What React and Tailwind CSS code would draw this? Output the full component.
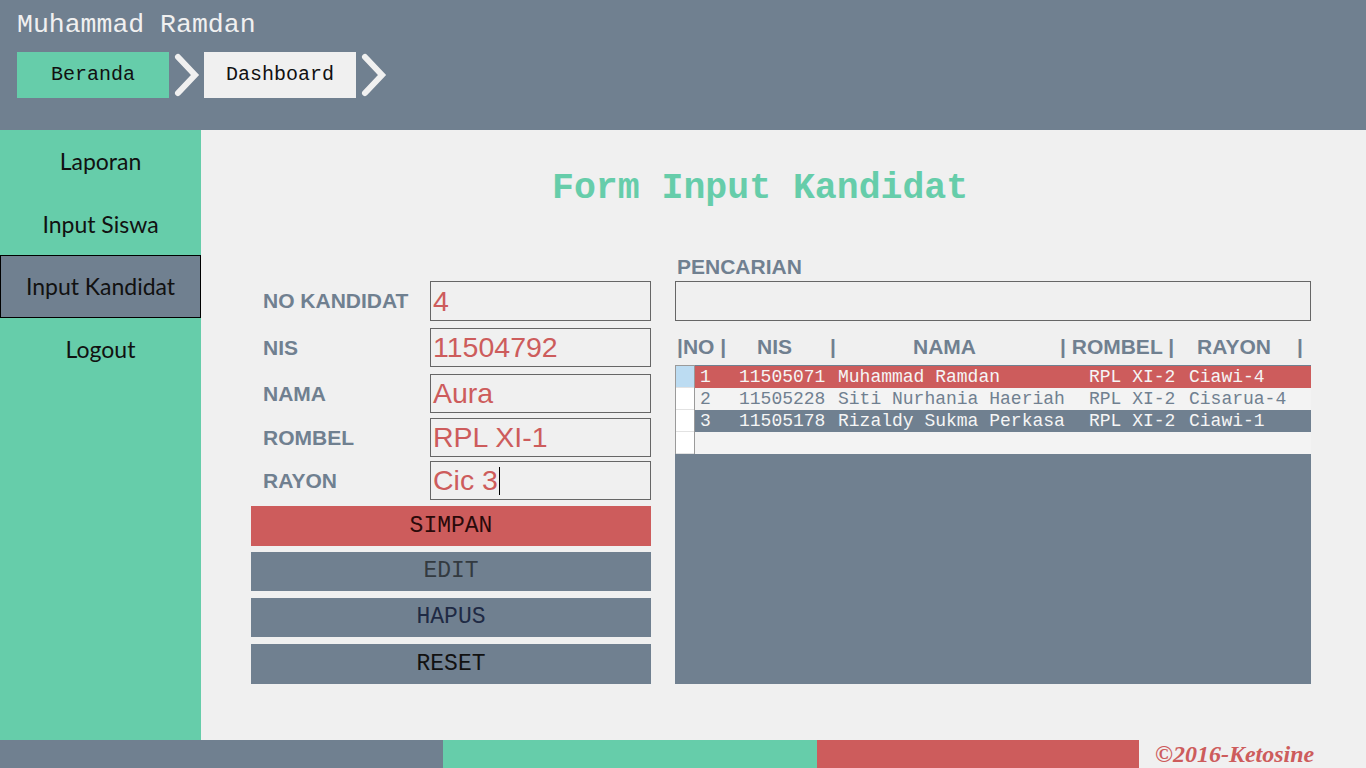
import React from 'react';

const mono = { fontFamily: '"Liberation Mono", "Courier New", monospace' };
const arial = { fontFamily: '"Liberation Sans", Arial, sans-serif' };
const gothic = { fontFamily: 'Lato, "Noto Sans", sans-serif' };

const Chevron = () => (
  <svg width="27" height="46" viewBox="0 0 27 46" className="shrink-0">
    <polyline points="5,5 22,23 5,41" fill="none" stroke="#f0f0f0" strokeWidth="6" strokeLinecap="round" />
  </svg>
);

const fields = [
  { label: 'NO KANDIDAT', value: '4', mt: 'mt-[23px]', h: 'h-[40px]' },
  { label: 'NIS', value: '11504792', mt: 'mt-[7px]', h: 'h-[39px]' },
  { label: 'NAMA', value: 'Aura', mt: 'mt-[7px]', h: 'h-[39px]' },
  { label: 'ROMBEL', value: 'RPL XI-1', mt: 'mt-[5px]', h: 'h-[39px]' },
  { label: 'RAYON', value: 'Cic 3', mt: 'mt-[4px]', h: 'h-[39px]', cursor: true },
];

const buttons = [
  { text: 'SIMPAN', cls: 'mt-[6px] h-[40px] bg-[#cd5c5c] text-[#2a0a0a]' },
  { text: 'EDIT', cls: 'mt-[6px] h-[39px] bg-[#708090] text-[#333a40]' },
  { text: 'HAPUS', cls: 'mt-[7px] h-[39px] bg-[#708090] text-[#1f2a44]' },
  { text: 'RESET', cls: 'mt-[7px] h-[40px] bg-[#708090] text-[#111111]' },
];

const rows = [
  { no: '1', nis: '11505071', nama: 'Muhammad Ramdan', rombel: 'RPL XI-2', rayon: 'Ciawi-4', cls: 'bg-[#cd5c5c] text-[#f5f5f5]' },
  { no: '2', nis: '11505228', nama: 'Siti Nurhania Haeriah', rombel: 'RPL XI-2', rayon: 'Cisarua-4', cls: 'bg-[#f3f3f3] text-[#708090]' },
  { no: '3', nis: '11505178', nama: 'Rizaldy Sukma Perkasa', rombel: 'RPL XI-2', rayon: 'Ciawi-1', cls: 'bg-[#708090] text-[#f5f5f5]' },
  { no: '', nis: '', nama: '', rombel: '', rayon: '', cls: 'bg-[#f3f3f3]' },
];

const menu = [
  { text: 'Laporan', h: 'h-[63px]' },
  { text: 'Input Siswa', h: 'h-[62px]' },
  { text: 'Input Kandidat', h: 'h-[63px]', active: true },
  { text: 'Logout', h: 'h-[63px]' },
];

export default function App() {
  return (
    <div className="w-[1366px] h-[768px] flex flex-col bg-[#f0f0f0] overflow-hidden">
      {/* Header */}
      <div className="h-[130px] shrink-0 bg-[#708090] pl-[17px] pt-[10px]">
        <div className="text-[26.5px] leading-[30px] text-[#f0f0f0]" style={mono}>Muhammad Ramdan</div>
        <div className="mt-[12px] flex items-center gap-[4px]" style={mono}>
          <div className="w-[152px] h-[46px] bg-[#66cdaa] flex items-center justify-center text-[20px] text-[#111]">Beranda</div>
          <Chevron />
          <div className="w-[152px] h-[46px] bg-[#f0f0f0] flex items-center justify-center text-[20px] text-[#111]">Dashboard</div>
          <Chevron />
        </div>
      </div>

      {/* Body */}
      <div className="h-[610px] flex">
        <div className="w-[201px] shrink-0 bg-[#66cdaa]" style={gothic}>
          {menu.map((m) => (
            <div
              key={m.text}
              className={`${m.h} flex items-center justify-center text-[23px] text-[#111] ${m.active ? 'bg-[#708090] border border-black' : ''}`}
            >
              {m.text}
            </div>
          ))}
        </div>

        <div className="flex-1 pt-[39px]">
          <div className="pl-[351px] text-[36.5px] leading-[40px] font-bold text-[#66cdaa]" style={mono}>Form Input Kandidat</div>

          <div className="mt-[47px] pl-[50px] flex gap-[24px]">
            {/* Left form */}
            <div className="w-[400px] pt-[2px]">
              {fields.map((f) => (
                <div key={f.label} className={`${f.mt} flex items-center`}>
                  <div className="w-[179px] pl-[12px] text-[21px] font-bold text-[#708090]" style={arial}>{f.label}</div>
                  <div className={`${f.h} flex-1 border border-[#666] flex items-center pl-[2px] text-[28.5px] text-[#cd5c5c]`} style={arial}>
                    <span>{f.value}</span>
                    {f.cursor && <span className="ml-[1px] w-[1px] h-[28px] bg-black" />}
                  </div>
                </div>
              ))}
              {buttons.map((b) => (
                <div key={b.text} className={`${b.cls} flex items-center justify-center text-[23px]`} style={mono}>{b.text}</div>
              ))}
            </div>

            {/* Right search + table */}
            <div className="w-[636px]">
              <div className="h-[25px] pl-[2px] text-[21px] leading-[21px] font-bold text-[#708090]" style={arial}>PENCARIAN</div>
              <div className="h-[40px] border border-[#666]" />
              <div className="h-[44px] pt-[14px] pl-[2px] flex text-[21px] leading-[24px] font-bold text-[#708090] whitespace-pre" style={arial}>
                <div className="w-[80px]">|NO |</div>
                <div className="w-[73px]">NIS</div>
                <div className="w-[83px]">|</div>
                <div className="w-[147px]">NAMA</div>
                <div className="w-[137px]">| ROMBEL |</div>
                <div className="w-[100px]">RAYON</div>
                <div>|</div>
              </div>
              <div className="h-[319px] bg-[#708090] flex items-start">
                <div className="w-[20px] shrink-0 bg-white border-l border-r border-t border-[#9a9a9a]">
                  {rows.map((r, i) => (
                    <div key={i} className={`h-[22px] border-b border-[#e2e2e2] ${i === 0 ? 'bg-[#bcdcf2]' : ''}`} />
                  ))}
                </div>
                <div className="flex-1 pt-[1px] text-[18px] leading-[22px] whitespace-pre" style={mono}>
                  {rows.map((r, i) => (
                    <div key={i} className={`h-[22px] flex ${r.cls}`}>
                      <div className="w-[44px] pl-[5px]">{r.no}</div>
                      <div className="w-[99px]">{r.nis}</div>
                      <div className="w-[251px]">{r.nama}</div>
                      <div className="w-[100px]">{r.rombel}</div>
                      <div className="flex-1">{r.rayon}</div>
                    </div>
                  ))}
                </div>
              </div>
            </div>
          </div>
        </div>
      </div>

      {/* Footer */}
      <div className="h-[28px] flex items-center">
        <div className="w-[443px] h-full bg-[#708090]" />
        <div className="w-[374px] h-full bg-[#66cdaa]" />
        <div className="w-[322px] h-full bg-[#cd5c5c]" />
        <div
          className="pl-[16px] text-[24px] leading-[28px] font-bold italic text-[#cd5c5c]"
          style={{ fontFamily: '"Liberation Serif", "DejaVu Serif", serif' }}
        >
          ©2016-Ketosine
        </div>
      </div>
    </div>
  );
}
